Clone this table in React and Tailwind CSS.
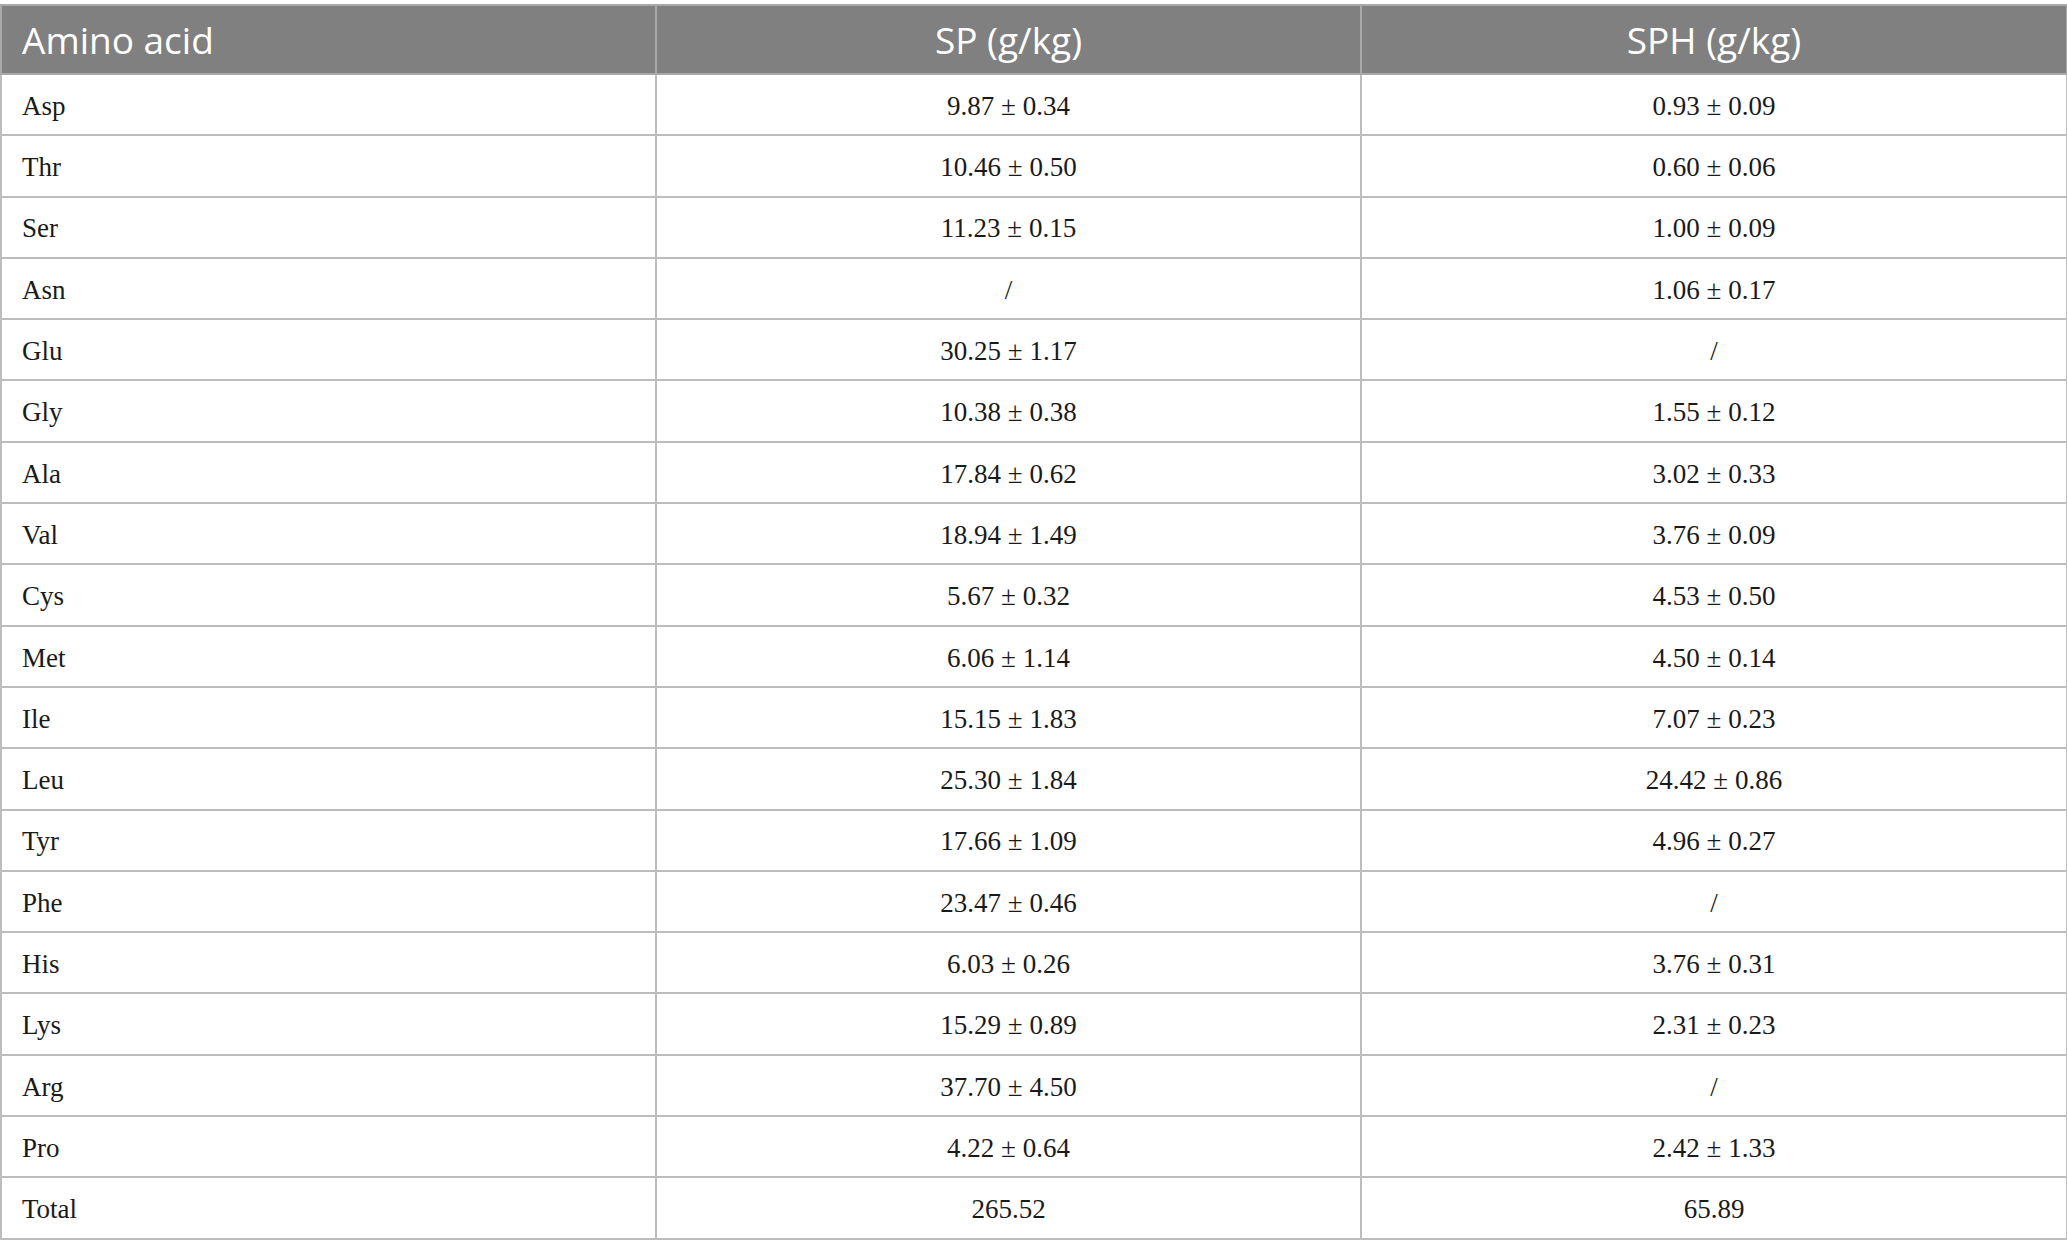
const rows = [
  ["Asp", "9.87 ± 0.34", "0.93 ± 0.09"],
  ["Thr", "10.46 ± 0.50", "0.60 ± 0.06"],
  ["Ser", "11.23 ± 0.15", "1.00 ± 0.09"],
  ["Asn", "/", "1.06 ± 0.17"],
  ["Glu", "30.25 ± 1.17", "/"],
  ["Gly", "10.38 ± 0.38", "1.55 ± 0.12"],
  ["Ala", "17.84 ± 0.62", "3.02 ± 0.33"],
  ["Val", "18.94 ± 1.49", "3.76 ± 0.09"],
  ["Cys", "5.67 ± 0.32", "4.53 ± 0.50"],
  ["Met", "6.06 ± 1.14", "4.50 ± 0.14"],
  ["Ile", "15.15 ± 1.83", "7.07 ± 0.23"],
  ["Leu", "25.30 ± 1.84", "24.42 ± 0.86"],
  ["Tyr", "17.66 ± 1.09", "4.96 ± 0.27"],
  ["Phe", "23.47 ± 0.46", "/"],
  ["His", "6.03 ± 0.26", "3.76 ± 0.31"],
  ["Lys", "15.29 ± 0.89", "2.31 ± 0.23"],
  ["Arg", "37.70 ± 4.50", "/"],
  ["Pro", "4.22 ± 0.64", "2.42 ± 1.33"],
  ["Total", "265.52", "65.89"],
];

const App = () => {
  return (
    <div className="min-h-screen bg-white pt-[4px]">
      <table className="w-[2066px] border-collapse table-fixed">
        <colgroup>
          <col className="w-[655px]" />
          <col className="w-[705px]" />
          <col className="w-[706px]" />
        </colgroup>
        <thead>
          <tr className="h-[69px] bg-[#808080] text-white font-['Open_Sans',sans-serif] text-[37px]">
            <th className="border-2 border-[#a9a9a9] px-[20px] text-left font-normal">
              Amino acid
            </th>
            <th className="border-2 border-[#a9a9a9] font-normal">SP (g/kg)</th>
            <th className="border-2 border-[#a9a9a9] font-normal">SPH (g/kg)</th>
          </tr>
        </thead>
        <tbody className="font-['Liberation_Serif',serif] text-[27px] text-[#1a1a1a]">
          {rows.map((r) => (
            <tr key={r[0]} className="h-[61.3px]">
              <td className="border-2 border-[#bdbdbd] pl-[20px] pt-[3px]">{r[0]}</td>
              <td className="border-2 border-[#bdbdbd] pt-[3px] text-center">{r[1]}</td>
              <td className="border-2 border-[#bdbdbd] pt-[3px] text-center">{r[2]}</td>
            </tr>
          ))}
        </tbody>
      </table>
    </div>
  );
};

export default App;
